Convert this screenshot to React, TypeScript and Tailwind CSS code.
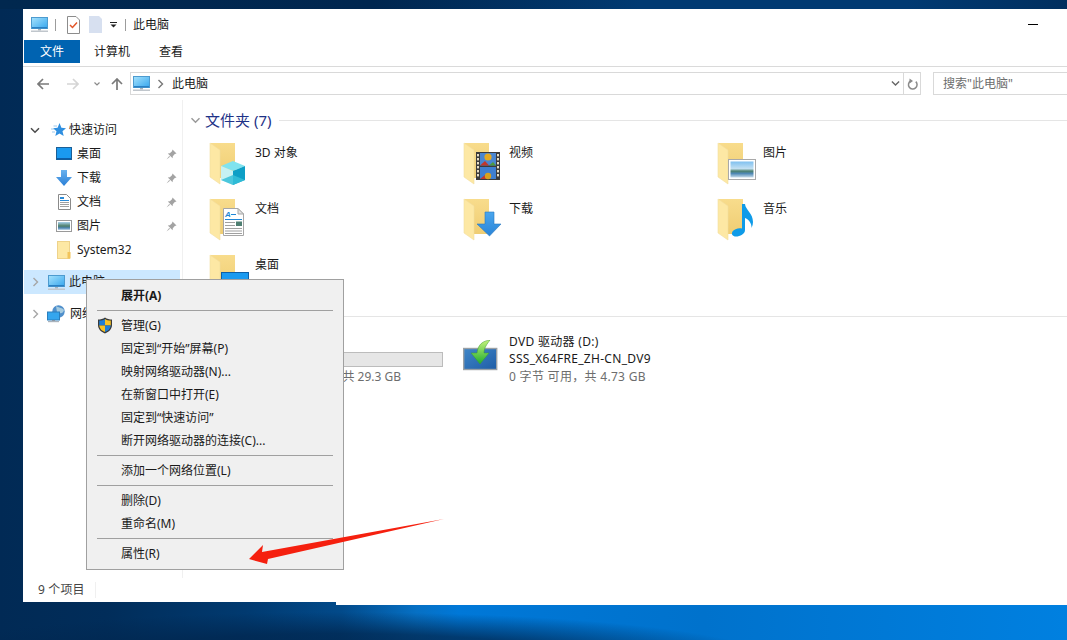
import React from "react";

const FONT = "font-['Noto_Sans','Noto_Sans_CJK_SC',sans-serif]";

function Pc({ size = 17 }: { size?: number }) {
  return (
    <svg width={size} height={size} viewBox="0 0 17 17" className="shrink-0">
      <defs>
        <linearGradient id="pcg" x1="0" y1="0" x2="1" y2="1">
          <stop offset="0" stopColor="#a6e2fc" />
          <stop offset="1" stopColor="#35a6ee" />
        </linearGradient>
      </defs>
      <rect x="0.5" y="1.5" width="16" height="11" fill="url(#pcg)" stroke="#4d9bcf" />
      <rect x="1" y="11" width="15" height="1.4" fill="#2a80c4" />
      <rect x="7" y="13" width="3" height="1.5" fill="#a9b2bb" />
      <rect x="0" y="14.5" width="17" height="1.5" fill="#c0c6cc" />
    </svg>
  );
}

function ChevronRight({ color = "#a6a6a6" }: { color?: string }) {
  return (
    <svg width="7" height="10" viewBox="0 0 7 10" className="shrink-0">
      <path d="M1.5 1 L5.5 5 L1.5 9" fill="none" stroke={color} strokeWidth="1.4" />
    </svg>
  );
}

function ChevronDown({ color = "#555", w = 10 }: { color?: string; w?: number }) {
  return (
    <svg width={w} height="7" viewBox="0 0 10 7" className="shrink-0">
      <path d="M1 1.2 L5 5.2 L9 1.2" fill="none" stroke={color} strokeWidth="1.5" />
    </svg>
  );
}

function Pin() {
  return (
    <svg width="11" height="11" viewBox="0 0 11 11" className="shrink-0">
      <path d="M6.5 0.5 L10.5 4.5 L8.8 5 L6.8 7.2 L6.6 9.2 L1.8 4.4 L3.8 4.2 L6 2.2Z" fill="#a3a3a3" />
      <path d="M3.2 7 L0.5 10.5 L4 7.8Z" fill="#a3a3a3" />
    </svg>
  );
}

function Folder({ small = false }: { small?: boolean }) {
  if (small) {
    return (
      <svg width="14" height="18" viewBox="0 0 14 18" className="shrink-0">
        <rect x="0.5" y="0.5" width="12" height="17" fill="#fde8a4" stroke="#eed28a" />
        <rect x="10.5" y="11" width="3" height="6.5" fill="#f2c45b" />
      </svg>
    );
  }
  return (
    <>
      <path d="M1 1 H25 V36 H10 L1 31Z" fill="url(#fb)" />
      <path d="M0 1 L10 8 V42 L0 35Z" fill="#fde8a4" />
      <path d="M0 1 L10 8 V42 L0 35Z" fill="none" stroke="#f2dd9f" strokeWidth="0.6" />
    </>
  );
}

function FolderDefs() {
  return (
    <defs>
      <linearGradient id="fb" x1="0" y1="0" x2="0" y2="1">
        <stop offset="0" stopColor="#f8dc8c" />
        <stop offset="1" stopColor="#efcd73" />
      </linearGradient>
      <linearGradient id="blueg" x1="0" y1="0" x2="0" y2="1">
        <stop offset="0" stopColor="#49a6ee" />
        <stop offset="1" stopColor="#2b85d8" />
      </linearGradient>
      <linearGradient id="sky" x1="0" y1="0" x2="0" y2="1">
        <stop offset="0" stopColor="#7fc0ef" />
        <stop offset="0.45" stopColor="#c3e0f2" />
        <stop offset="0.6" stopColor="#4b7f6c" />
        <stop offset="0.75" stopColor="#4f88b4" />
        <stop offset="1" stopColor="#c7dcea" />
      </linearGradient>
    </defs>
  );
}

const Cube = () => (
  <g>
    <path d="M11 24 L23 19 L35 24 L23 29Z" fill="#7fe3ef" />
    <path d="M11 24 L23 29 V43 L11 38Z" fill="#c6f1f3" />
    <path d="M35 24 L23 29 V43 L35 38Z" fill="#0d9fc6" />
    <path d="M11 38 L23 33 L35 38 L23 43Z" fill="#35c0d8" opacity="0.85" />
  </g>
);

const Film = () => (
  <g>
    <rect x="12" y="10" width="24" height="28" fill="#3b3b3b" />
    <rect x="16" y="11" width="16" height="12.5" fill="#4a86d0" />
    <rect x="16" y="25" width="16" height="12" fill="#3f7fd0" />
    <path d="M16 23.5 L21 19 L25 23.5Z" fill="#c2372c" />
    <path d="M25 23.5 L29 20 L32 23.5Z" fill="#4e9a3d" />
    <circle cx="24" cy="15" r="3.6" fill="#e5a91f" />
    <path d="M16 37 L21 33 L25 37Z" fill="#c2372c" />
    <circle cx="24" cy="34" r="3.2" fill="#d9a11c" />
    {[12, 16, 20, 24, 28, 32].map((y) => (
      <React.Fragment key={y}>
        <rect x="13" y={y} width="2" height="2.4" fill="#e8dfc8" />
        <rect x="33" y={y} width="2" height="2.4" fill="#e8dfc8" />
      </React.Fragment>
    ))}
  </g>
);

const PictureO = () => (
  <g>
    <rect x="10.5" y="17.5" width="27" height="20" fill="#fff" stroke="#a9a9a9" />
    <rect x="12.5" y="19.5" width="23" height="16" fill="url(#sky)" />
  </g>
);

const DocO = () => (
  <g>
    <path d="M13.5 10.5 H28 L33.5 16 V37.5 H13.5Z" fill="#fff" stroke="#a6a6a6" />
    <path d="M28 10.5 V16 H33.5Z" fill="#e4e4e4" stroke="#a6a6a6" />
    <text x="15" y="19" fontSize="8" fontWeight="700" fontStyle="italic" fill="#1f87d6" fontFamily="Liberation Sans, sans-serif">A</text>
    <rect x="21" y="16" width="5" height="1" fill="#1f87d6" />
    <rect x="15" y="21" width="17" height="1" fill="#1f87d6" />
    <rect x="15" y="24" width="10" height="1" fill="#a0a0a0" />
    <rect x="26" y="23.5" width="6" height="4.5" fill="#4f7f72" />
    <rect x="15" y="27" width="10" height="1" fill="#a0a0a0" />
    {[30, 32.5, 35].map((y) => (
      <rect key={y} x="15" y={y} width="17" height="1" fill="#a0a0a0" />
    ))}
  </g>
);

const DownO = () => (
  <path d="M21 14 H30 V26 H37 L25.5 38 L13 26 H21Z" fill="url(#blueg)" stroke="#2a78c0" strokeWidth="0.6" />
);

const NoteO = () => (
  <path d="M24 6 H27 C27.5 12 35 15 35 24 C35 26 34.5 28 33.5 30 C34 25 30 21 27 20 V32 C27 36 22 38.5 18 38.5 C14.5 38.5 13 36 14.5 33.5 C16 31 21 29.5 24 30.5Z" fill="#0f9be8" />
);

const DesktopO = () => (
  <g>
    <rect x="11.5" y="18.5" width="27" height="22" fill="#1a9af0" stroke="#0d5fa6" />
  </g>
);

const items: { name: string; o: React.ReactNode }[] = [
  { name: "3D 对象", o: <Cube /> },
  { name: "视频", o: <Film /> },
  { name: "图片", o: <PictureO /> },
  { name: "文档", o: <DocO /> },
  { name: "下载", o: <DownO /> },
  { name: "音乐", o: <NoteO /> },
  { name: "桌面", o: <DesktopO /> },
];

const quick: { name: string; icon: React.ReactNode; pin: boolean }[] = [
  {
    name: "桌面",
    pin: true,
    icon: (
      <svg width="16" height="14" viewBox="0 0 16 14">
        <rect x="0.5" y="0.5" width="15" height="12" fill="#1a9af0" stroke="#1b5f96" />
        <rect x="1" y="11" width="14" height="1.4" fill="#0c5ea8" />
      </svg>
    ),
  },
  {
    name: "下载",
    pin: true,
    icon: (
      <svg width="16" height="16" viewBox="0 0 16 16">
        <path d="M5 0 H11 V7 H16 L8 16 L0 7 H5Z" fill="url(#blueg2)" />
        <defs>
          <linearGradient id="blueg2" x1="0" y1="0" x2="0" y2="1">
            <stop offset="0" stopColor="#6ab2ee" />
            <stop offset="1" stopColor="#2a7fd6" />
          </linearGradient>
        </defs>
      </svg>
    ),
  },
  {
    name: "文档",
    pin: true,
    icon: (
      <svg width="13" height="16" viewBox="0 0 13 16">
        <path d="M0.5 0.5 H8.5 L12.5 4.5 V15.5 H0.5Z" fill="#fff" stroke="#8a8a8a" />
        <rect x="2" y="3" width="4" height="2" fill="#2a8bd8" />
        <rect x="2" y="6" width="9" height="1" fill="#2a8bd8" />
        <rect x="2" y="8" width="9" height="1" fill="#a0a0a0" />
        <rect x="2" y="10" width="9" height="1" fill="#a0a0a0" />
        <rect x="2" y="12" width="9" height="1" fill="#a0a0a0" />
      </svg>
    ),
  },
  {
    name: "图片",
    pin: true,
    icon: (
      <svg width="16" height="12" viewBox="0 0 16 12">
        <defs>
          <linearGradient id="sky2" x1="0" y1="0" x2="0" y2="1">
            <stop offset="0" stopColor="#a8d2ee" />
            <stop offset="0.5" stopColor="#4f7f68" />
            <stop offset="0.75" stopColor="#4c85b4" />
            <stop offset="1" stopColor="#c7dcea" />
          </linearGradient>
        </defs>
        <rect x="0.5" y="0.5" width="15" height="11" fill="#fff" stroke="#9a9a9a" />
        <rect x="2" y="2" width="12" height="8" fill="url(#sky2)" />
      </svg>
    ),
  },
  { name: "System32", pin: false, icon: <Folder small /> },
];

type MenuEntry = { t: string; b?: boolean; shield?: boolean } | "sep";
const menu: MenuEntry[] = [
  { t: "展开(A)", b: true },
  "sep",
  { t: "管理(G)", shield: true },
  { t: "固定到“开始”屏幕(P)" },
  { t: "映射网络驱动器(N)..." },
  { t: "在新窗口中打开(E)" },
  { t: "固定到“快速访问”" },
  { t: "断开网络驱动器的连接(C)..." },
  "sep",
  { t: "添加一个网络位置(L)" },
  "sep",
  { t: "删除(D)" },
  { t: "重命名(M)" },
  "sep",
  { t: "属性(R)" },
];

function SectionHeader({ label, line = "" }: { label: string; line?: string }) {
  return (
    <div className={`flex h-5 items-center ${line}`}>
      <div className="flex w-[22px] justify-start pl-[7px]">
        <ChevronDown color="#9a9a9a" w={11} />
      </div>
      <span className="whitespace-nowrap text-[15px] leading-5 text-[#1e3287]">{label}</span>
      <div className="ml-2 h-px flex-1 bg-[#e5e5e5]" />
    </div>
  );
}

export default function App() {
  return (
    <div
      className={`relative flex h-[640px] w-[1067px] flex-col overflow-hidden bg-[radial-gradient(ellipse_430px_48px_at_340px_660px,rgba(1,38,78,0.92)_0%,rgba(1,38,78,0.75)_55%,rgba(1,38,78,0)_100%),linear-gradient(90deg,#012a55_0%,#012d5a_10%,#013a70_23%,#024a8a_32%,#0670c4_39%,#0078d8_43%,#0072cc_66%,#0080e0_100%)] text-xs text-[#1a1a1a] ${FONT}`}
    >
      <div className="h-[9px] w-full shrink-0 bg-[linear-gradient(90deg,#01284f_0%,#00264f_35%,#013a72_60%,#013a72_85%,#012f5f_100%)]" />
      <div className="relative ml-[23px] flex h-[593px] w-[1044px] flex-col bg-white">
        {/* title bar */}
        <div className="flex h-[31px] shrink-0 items-center">
          <div className="ml-[8px]">
            <Pc />
          </div>
          <div className="ml-[7px] h-3 w-px bg-[#9c9c9c]" />
          <svg width="13" height="18" viewBox="0 0 13 18" className="ml-[11px]">
            <path d="M0.5 0.5 H9 L12.5 4 V17.5 H0.5Z" fill="#fff" stroke="#8c8c8c" />
            <path d="M3 9 L5.5 11.5 L10 6.5" fill="none" stroke="#e2562a" strokeWidth="1.5" />
          </svg>
          <svg width="13" height="17" viewBox="0 0 13 17" className="ml-[9px]">
            <path d="M0 0 H10 L13 3 V17 H0Z" fill="#d7e0f0" />
          </svg>
          <svg width="7" height="6" viewBox="0 0 7 6" className="ml-[8px]">
            <rect x="0" y="0" width="7" height="1" fill="#222" />
            <path d="M0.5 2.5 H6.5 L3.5 5.5Z" fill="#222" />
          </svg>
          <div className="ml-[8px] h-3 w-px bg-[#9c9c9c]" />
          <span className="ml-[7px] leading-4">此电脑</span>
          <div className="ml-auto mr-[29px] h-px w-[10px] bg-black" />
        </div>
        {/* tabs */}
        <div className="flex h-[27px] shrink-0 border-b border-[#dadada] pl-px">
          <div className="flex h-[23px] w-14 items-center justify-center bg-[#0063b1] text-white">文件</div>
          <div className="ml-[14px] flex h-[23px] items-center">计算机</div>
          <div className="ml-[29px] flex h-[23px] items-center">查看</div>
        </div>
        {/* address */}
        <div className="flex h-[33px] shrink-0 items-center">
          <svg width="12" height="12" viewBox="0 0 12 12" className="ml-[14px]">
            <path d="M6 1 L1 6 L6 11 M1 6 H12" fill="none" stroke="#7a7a7a" strokeWidth="1.7" />
          </svg>
          <svg width="12" height="12" viewBox="0 0 12 12" className="ml-[18px]">
            <path d="M6 1 L11 6 L6 11 M11 6 H0" fill="none" stroke="#d5d5d5" strokeWidth="1.7" />
          </svg>
          <svg width="6" height="4" viewBox="0 0 6 4" className="ml-[15px]">
            <path d="M0.5 0.5 L3 3 L5.5 0.5" fill="none" stroke="#8a8a8a" strokeWidth="1.2" />
          </svg>
          <svg width="12" height="12" viewBox="0 0 12 12" className="ml-[11px]">
            <path d="M1 6 L6 1 L11 6 M6 1 V12" fill="none" stroke="#7a7a7a" strokeWidth="1.7" />
          </svg>
          <div className="ml-[7px] flex h-[23px] w-[791px] items-center border border-[#d9d9d9]">
            <div className="ml-[2px]">
              <Pc />
            </div>
            <div className="ml-[7px]">
              <ChevronRight color="#777" />
            </div>
            <span className="ml-[8px]">此电脑</span>
            <div className="ml-auto flex h-full items-center">
              <ChevronDown color="#666" w={9} />
              <div className="ml-[3px] h-full w-px bg-[#d9d9d9]" />
              <div className="flex w-[16px] items-center justify-center">
                <svg width="11" height="12" viewBox="0 0 11 12">
                  <path d="M8.8 3.6 A4.3 4.3 0 1 1 3.5 3" fill="none" stroke="#8a8a8a" strokeWidth="1.5" />
                  <path d="M2.5 0.5 L6 3 L2.5 5.5Z" fill="#8a8a8a" />
                </svg>
              </div>
            </div>
          </div>
          <div className="ml-[12px] flex h-[23px] flex-1 items-center border border-r-0 border-[#d9d9d9] pl-[9px] text-[#6d6d6d]">
            搜索"此电脑"
          </div>
        </div>
        {/* main */}
        <div className="flex min-h-0 flex-1">
          <div className="w-[160px] shrink-0 border-r border-[#f0f0f0] pt-[18px]">
            <div className="flex h-6 items-center">
              <div className="ml-[7px]">
                <ChevronDown color="#4a4a4a" w={10} />
              </div>
              <svg width="16" height="14" viewBox="0 0 16 14" className="ml-[10px]">
                <path d="M9.5 0 L11.4 4.8 L16 5.2 L12.5 8.2 L13.7 13 L9.5 10.4 L5.3 13 L6.5 8.2 L3 5.2 L7.6 4.8Z" fill="#2f8fe0" />
                <path d="M3.5 3 H7 M1 6 H4 M2 9 H5" stroke="#9cc9ee" strokeWidth="1" />
              </svg>
              <span className="ml-[3px]">快速访问</span>
            </div>
            {quick.map((q) => (
              <div key={q.name} className="flex h-6 items-center">
                <div className="ml-[33px] flex w-[16px] justify-center">{q.icon}</div>
                <span className="ml-[5px]">{q.name}</span>
                {q.pin && (
                  <div className="ml-auto mr-[5px]">
                    <Pin />
                  </div>
                )}
              </div>
            ))}
            <div className="ml-px mt-2 flex h-6 w-[156px] items-center bg-[#cce8ff]">
              <div className="ml-[8px]">
                <ChevronRight />
              </div>
              <div className="ml-[9px]">
                <Pc />
              </div>
              <span className="ml-[4px]">此电脑</span>
            </div>
            <div className="mt-2 flex h-6 items-center">
              <div className="ml-[9px]">
                <ChevronRight />
              </div>
              <svg width="18" height="18" viewBox="0 0 18 18" className="ml-[8px]">
                <circle cx="11.5" cy="6.5" r="6.2" fill="#4f8fcb" />
                <path d="M9 1 C11 3 15 2 17 5 C16 9 13 9 10 7Z" fill="#a5cbe0" />
                <rect x="0.5" y="7" width="12" height="8" fill="#35a6ee" stroke="#2a7fbe" />
                <rect x="5" y="15" width="3" height="1" fill="#8a96a3" />
                <rect x="1" y="16" width="11" height="1.2" fill="#a9b3bd" />
              </svg>
              <span className="ml-[5px]">网络</span>
            </div>
          </div>
          <div className="min-w-0 flex-1 pt-[10px]">
            <SectionHeader label="文件夹 (7)" />
            <div className="mt-[12px] grid grid-cols-[254px_254px_254px] gap-y-1 pl-[27px]">
              {items.map((it) => (
                <div key={it.name} className="flex h-[52px]">
                  <svg width="44" height="52" viewBox="0 0 44 52" className="shrink-0 overflow-visible">
                    <FolderDefs />
                    <Folder />
                    {it.o}
                  </svg>
                  <span className="ml-px mt-px whitespace-nowrap leading-5">{it.name}</span>
                </div>
              ))}
            </div>
            <SectionHeader label="设备和驱动器 (2)" />
            <div className="mt-[7px] grid grid-cols-[254px_254px] pl-[27px]">
              <div className="flex">
                <div className="w-[45px] shrink-0" />
                <div className="w-[188px]">
                  <div className="h-[18px] leading-[18px]">本地磁盘 (C:)</div>
                  <div className="mt-px h-[15px] border border-[#bcbcbc] bg-[#e6e6e6]" />
                  <div className="mt-px h-[18px] text-right leading-[18px] text-[#6d6d6d]">
                    <span className="mr-[42px]">16.5 GB 可用，共 29.3 GB</span>
                  </div>
                </div>
              </div>
              <div className="flex">
                <svg width="36" height="34" viewBox="0 0 36 34" className="ml-[-1px] mt-[7px] w-[36px] shrink-0">
                  <defs>
                    <linearGradient id="dvd" x1="0" y1="0" x2="1" y2="1">
                      <stop offset="0" stopColor="#3f86c8" />
                      <stop offset="1" stopColor="#1f5da6" />
                    </linearGradient>
                    <linearGradient id="grn" x1="0" y1="0" x2="0" y2="1">
                      <stop offset="0" stopColor="#c4f27a" />
                      <stop offset="1" stopColor="#1fae2f" />
                    </linearGradient>
                  </defs>
                  <rect x="0.7" y="8.5" width="33" height="21" fill="url(#dvd)" stroke="#9aa0a5" strokeWidth="1.4" />
                  <path d="M27 0 C20 1 15 4 14 13 H8 L17 24 L26 13 H21 C21 8 24 4 27 0Z" fill="url(#grn)" stroke="#3c9b2e" strokeWidth="0.5" />
                </svg>
                <div className="ml-[10px] whitespace-nowrap tracking-[0.3px]">
                  <div className="h-[18px] leading-[18px]">DVD 驱动器 (D:)</div>
                  <div className="h-[17px] leading-[15px]">SSS_X64FRE_ZH-CN_DV9</div>
                  <div className="h-[18px] leading-[18px] text-[#6d6d6d]">0 字节 可用，共 4.73 GB</div>
                </div>
              </div>
            </div>
          </div>
        </div>
        {/* status */}
        <div className="flex h-6 shrink-0 items-center pl-[15px] text-[#444]">
          <span className="tracking-[0.15px]">9 个项目</span>
          <div className="ml-[10px] h-4 w-px bg-[#f0f0f0]" />
        </div>
      </div>
      {/* lower-right part of the window sticking out */}
      <div className="absolute left-[336px] top-[602px] h-[3px] w-[731px] bg-white" />
      {/* context menu */}
      <div className="absolute left-[86px] top-[279px] w-[258px] border border-[#a0a0a0] bg-[#f0f0f0] py-1">
        {menu.map((m, i) =>
          m === "sep" ? (
            <div key={i} className="flex h-[7px] items-center px-[10px]">
              <div className="h-px w-full bg-[#a0a0a0]" />
            </div>
          ) : (
            <div key={i} className={`relative flex h-[23px] items-center pl-[34px] ${m.b ? "font-bold" : ""}`}>
              {m.shield && (
                <svg width="16" height="17" viewBox="0 0 16 17" className="absolute left-[10px] top-[3px]">
                  <path d="M8 0.5 C10 2 12.5 2.5 15 2.5 V8 C15 12 12 15 8 16.5 C4 15 1 12 1 8 V2.5 C3.5 2.5 6 2 8 0.5Z" fill="#3a3a3a" />
                  <path d="M8 2 V8.5 H2.2 V3.5 C4.5 3.5 6.5 3 8 2Z" fill="#1f7fd6" />
                  <path d="M8 2 C9.5 3 11.5 3.5 13.8 3.5 V8.5 H8Z" fill="#f7c325" />
                  <path d="M2.2 8.5 H8 V15 C5 14 2.5 12 2.2 8.5Z" fill="#f7c325" />
                  <path d="M8 8.5 H13.8 C13.5 12 11 14 8 15Z" fill="#1f7fd6" />
                </svg>
              )}
              <span className="whitespace-nowrap">{m.t}</span>
            </div>
          )
        )}
      </div>
      {/* red annotation arrow */}
      <svg width="1067" height="640" viewBox="0 0 1067 640" className="pointer-events-none absolute left-0 top-0">
        <path d="M249 559 L263 545 L262 552 L444 519 L268 559 L267 564Z" fill="#f5200f" />
      </svg>
    </div>
  );
}
